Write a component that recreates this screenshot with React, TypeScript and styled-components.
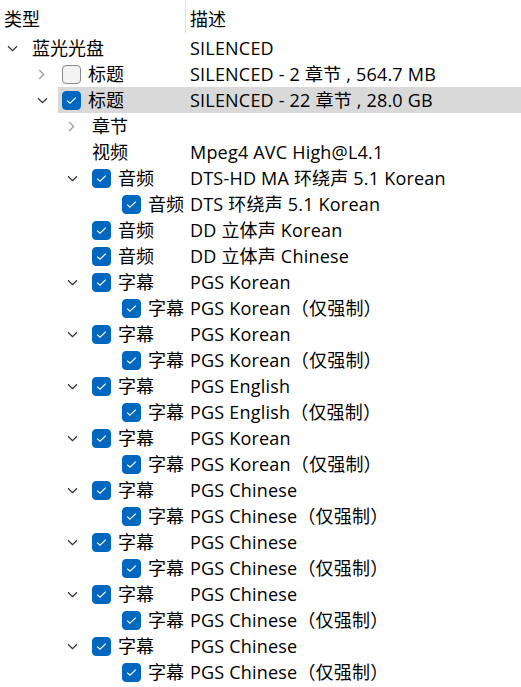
import React from 'react'
import styled, { createGlobalStyle } from 'styled-components'

const GlobalStyle = createGlobalStyle`
    html, body {
        margin: 0;
        padding: 0;
        background: #ffffff;
    }
    body {
        font-family: "Open Sans", "Noto Sans CJK SC", sans-serif;
        font-size: 18px;
        color: #000000;
    }
`

const DESC_X = 190
const INDENT = 30

const Tree = styled.div`
    width: 521px;
    height: 687px;
    overflow: hidden;
    background: #ffffff;
`

const Header = styled.div`
    display: flex;
    height: 35px;
    align-items: center;
`

const HeaderCell = styled.div<{ $width?: number }>`
    width: ${p => (p.$width ? `${p.$width}px` : 'auto')};
    flex: ${p => (p.$width ? 'none' : '1')};
    height: 33px;
    align-self: flex-start;
    display: flex;
    align-items: center;
    padding: 2px 0 0 4px;
    box-sizing: border-box;

    & + & {
        border-left: 1px solid #e5e5e5;
    }
`

const Row = styled.div<{ $level: number }>`
    display: flex;
    align-items: center;
    height: 26px;
    padding-left: ${p => p.$level * INDENT}px;
`

const ChevronSlot = styled.div`
    width: 28px;
    height: 26px;
    flex: none;
    display: flex;
    align-items: center;
    padding-left: 7px;
    box-sizing: border-box;
`

const Item = styled.div<{ $selected?: boolean }>`
    flex: 1;
    height: 26px;
    display: flex;
    align-items: center;
    padding-left: 4px;
    background: ${p => (p.$selected ? '#d9d9d9' : 'transparent')};
    white-space: nowrap;
`

const NameCell = styled.div<{ $level: number }>`
    width: ${p => DESC_X - (p.$level * INDENT + 32)}px;
    flex: none;
    display: flex;
    align-items: center;
    gap: 7px;
    line-height: 26px;
`

const DescCell = styled.div`
    flex: 1;
    line-height: 26px;
    letter-spacing: 0.2px;
`

const Box = styled.span<{ $checked: boolean }>`
    width: 19px;
    height: 19px;
    flex: none;
    box-sizing: border-box;
    border-radius: 4px;
    display: inline-flex;
    align-items: center;
    justify-content: center;
    background: ${p => (p.$checked ? '#0067c0' : '#f3f3f3')};
    border: 1px solid ${p => (p.$checked ? '#0067c0' : '#8a8a8a')};
`

const Chevron = ({ dir }: { dir: 'down' | 'right' }) =>
    dir === 'down' ? (
        <svg width="11" height="7" viewBox="0 0 11 7">
            <path d="M1 1.2 L5.5 5.6 L10 1.2" fill="none" stroke="#333333" strokeWidth="1.3" />
        </svg>
    ) : (
        <svg width="11" height="11" viewBox="0 0 11 11">
            <path d="M2.2 1 L6.6 5.5 L2.2 10" fill="none" stroke="#9a9a9a" strokeWidth="1.3" />
        </svg>
    )

const Checkbox = ({ checked }: { checked: boolean }) => (
    <Box $checked={checked}>
        {checked && (
            <svg width="11" height="9" viewBox="0 0 11 9">
                <path d="M1.2 4.6 L4 7.2 L9.8 1.6" fill="none" stroke="#ffffff" strokeWidth="1.2" />
            </svg>
        )}
    </Box>
)

type Node = {
    level: number
    chevron?: 'down' | 'right'
    check?: boolean
    name: string
    desc: string
    selected?: boolean
}

const subtitleLangs = ['Korean', 'Korean', 'English', 'Korean', 'Chinese', 'Chinese', 'Chinese', 'Chinese']

const rows: Node[] = [
    { level: 0, chevron: 'down', name: '蓝光光盘', desc: 'SILENCED' },
    { level: 1, chevron: 'right', check: false, name: '标题', desc: 'SILENCED - 2 章节 , 564.7 MB' },
    { level: 1, chevron: 'down', check: true, name: '标题', desc: 'SILENCED - 22 章节 , 28.0 GB', selected: true },
    { level: 2, chevron: 'right', name: '章节', desc: '' },
    { level: 2, name: '视频', desc: 'Mpeg4 AVC High@L4.1' },
    { level: 2, chevron: 'down', check: true, name: '音频', desc: 'DTS-HD MA 环绕声 5.1 Korean' },
    { level: 3, check: true, name: '音频', desc: 'DTS 环绕声 5.1 Korean' },
    { level: 2, check: true, name: '音频', desc: 'DD 立体声 Korean' },
    { level: 2, check: true, name: '音频', desc: 'DD 立体声 Chinese' },
    ...subtitleLangs.flatMap((lang): Node[] => [
        { level: 2, chevron: 'down', check: true, name: '字幕', desc: `PGS ${lang}` },
        { level: 3, check: true, name: '字幕', desc: `PGS ${lang}（仅强制）` },
    ]),
]

const App = () => {
    return (
        <>
            <GlobalStyle />
            <Tree>
                <Header>
                    <HeaderCell $width={185}>类型</HeaderCell>
                    <HeaderCell>描述</HeaderCell>
                </Header>
                {rows.map((r, i) => (
                    <Row key={i} $level={r.level}>
                        <ChevronSlot>{r.chevron && <Chevron dir={r.chevron} />}</ChevronSlot>
                        <Item $selected={r.selected}>
                            <NameCell $level={r.level}>
                                {r.check !== undefined && <Checkbox checked={r.check} />}
                                <span>{r.name}</span>
                            </NameCell>
                            <DescCell>{r.desc}</DescCell>
                        </Item>
                    </Row>
                ))}
            </Tree>
        </>
    )
}

export default App
